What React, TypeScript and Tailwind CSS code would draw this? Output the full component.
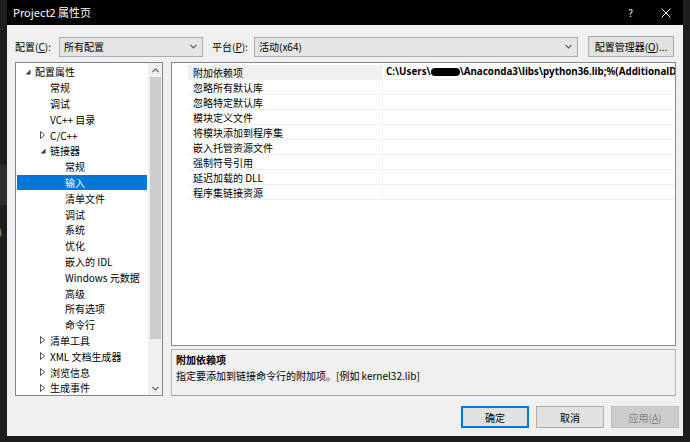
import React from 'react';

type TreeItem = { label: string; level: number; tri?: 'open' | 'closed'; selected?: boolean };

const TREE: TreeItem[] = [
  { label: '配置属性', level: 0, tri: 'open' },
  { label: '常规', level: 1 },
  { label: '调试', level: 1 },
  { label: 'VC++ 目录', level: 1 },
  { label: 'C/C++', level: 1, tri: 'closed' },
  { label: '链接器', level: 1, tri: 'open' },
  { label: '常规', level: 2 },
  { label: '输入', level: 2, selected: true },
  { label: '清单文件', level: 2 },
  { label: '调试', level: 2 },
  { label: '系统', level: 2 },
  { label: '优化', level: 2 },
  { label: '嵌入的 IDL', level: 2 },
  { label: 'Windows 元数据', level: 2 },
  { label: '高级', level: 2 },
  { label: '所有选项', level: 2 },
  { label: '命令行', level: 2 },
  { label: '清单工具', level: 1, tri: 'closed' },
  { label: 'XML 文档生成器', level: 1, tri: 'closed' },
  { label: '浏览信息', level: 1, tri: 'closed' },
  { label: '生成事件', level: 1, tri: 'closed' },
];

const INDENT = ['w-[8px]', 'w-[23px]', 'w-[38px]'];

const PROPS = [
  '附加依赖项',
  '忽略所有默认库',
  '忽略特定默认库',
  '模块定义文件',
  '将模块添加到程序集',
  '嵌入托管资源文件',
  '强制符号引用',
  '延迟加载的 DLL',
  '程序集链接资源',
];

const Chevron = ({ up = false }: { up?: boolean }) => (
  <svg width="7" height="5" viewBox="0 0 7 5" className={up ? 'rotate-180' : ''}>
    <path d="M0.5 1 L3.5 4 L6.5 1" fill="none" stroke="#606060" strokeWidth="1.1" />
  </svg>
);

const Triangle = ({ kind }: { kind?: 'open' | 'closed' }) => {
  if (!kind) return null;
  if (kind === 'open')
    return (
      <svg width="6" height="6" viewBox="0 0 6 6">
        <path d="M5.5 0.5 L5.5 5.5 L0.5 5.5 Z" fill="#404040" />
      </svg>
    );
  return (
    <svg width="5" height="8" viewBox="0 0 5 8">
      <path d="M0.5 0.5 L4.5 4 L0.5 7.5 Z" fill="none" stroke="#505050" strokeWidth="1" />
    </svg>
  );
};

const Dropdown = ({ text, width }: { text: string; width: string }) => (
  <div className={`${width} h-[20px] flex items-center justify-between bg-[#e5e5e5] border border-[#acacac] pl-[4px] pr-[5px]`}>
    <span>{text}</span>
    <Chevron />
  </div>
);

export default function App() {
  return (
    <div className="w-[690px] h-[442px] bg-[#1e1e1e] flex overflow-hidden text-[10px] text-black [font-family:'Noto_Sans_CJK_SC',sans-serif]">
      {/* VS background peeking on the left */}
      <div className="w-[7px] flex flex-col">
        <div className="h-[165px]" />
        <div className="h-[40px] bg-[#2d2d30]" />
        <div className="h-[22px]" />
        <div className="text-[#c8c8c8] text-[9px] leading-[10px] -ml-[1px]">)</div>
      </div>

      <div className="w-[676px] h-[436px] flex flex-col">
        {/* Title bar */}
        <div className="h-[25px] bg-black text-white flex items-center pl-[6px] pr-[12px]">
          <span className="text-[11px]">Project2 属性页</span>
          <span className="ml-auto text-[10px] mr-[28px]">?</span>
          <svg width="10" height="10" viewBox="0 0 10 10">
            <path d="M0.5 0.5 L9.5 9.5 M9.5 0.5 L0.5 9.5" stroke="#ffffff" strokeWidth="1" />
          </svg>
        </div>

        {/* Body */}
        <div className="flex-1 bg-[#f0f0f0] flex flex-col pl-[8px] pr-[4px] pt-[11px] pb-[8px]">
          {/* Config row */}
          <div className="h-[21px] flex items-center">
            <span className="w-[44px]">
              配置(<span className="underline">C</span>):
            </span>
            <Dropdown text="所有配置" width="w-[144px]" />
            <span className="ml-[9px] w-[42px]">
              平台(<span className="underline">P</span>):
            </span>
            <Dropdown text="活动(x64)" width="w-[324px]" />
            <div className="ml-[10px] w-[86px] h-[21px] bg-[#e1e1e1] border border-[#adadad] flex items-center justify-center">
              配置管理器(<span className="underline">O</span>)...
            </div>
          </div>

          {/* Main */}
          <div className="mt-[5px] h-[334px] flex gap-[8px]">
            {/* Tree */}
            <div className="w-[148px] h-full border border-[#828790] bg-white flex">
              <div className="flex-1 p-[1px]">
                {TREE.map((it, i) => (
                  <div
                    key={i}
                    className={`h-[15.8px] flex items-center whitespace-nowrap ${it.selected ? 'bg-[#0078d7] text-white' : ''}`}
                  >
                    <div className={INDENT[it.level]} />
                    <div className="w-[10px] flex items-center">
                      <Triangle kind={it.tri} />
                    </div>
                    <span>{it.label}</span>
                  </div>
                ))}
              </div>
              <div className="w-[14px] bg-[#f0f0f0] flex flex-col items-center">
                <div className="h-[14px] flex items-center justify-center">
                  <Chevron up />
                </div>
                <div className="w-[11px] h-[262px] bg-[#cdcdcd]" />
                <div className="flex-1" />
                <div className="h-[14px] flex items-center justify-center">
                  <Chevron />
                </div>
              </div>
            </div>

            {/* Property grid + description */}
            <div className="w-[505px] flex flex-col">
              <div className="h-[284px] border border-[#828790] bg-white pt-[2px] flex flex-col">
                {PROPS.map((p, i) => (
                  <div key={i} className="h-[15px] flex">
                    <div className="w-[16px] bg-white" />
                    <div
                      className={`w-[194px] pl-[5px] flex items-center border-b border-[#f0f0f0] ${i === 0 ? 'bg-[#f0f0f0]' : ''}`}
                    >
                      {p}
                    </div>
                    <div className="flex-1 min-w-0 pl-[3px] flex items-center border-b border-l border-[#f0f0f0] overflow-hidden whitespace-nowrap">
                      {i === 0 && (
                        <span className="font-bold text-[9.8px] [font-family:'Noto_Sans',sans-serif] flex items-center">
                          C:\Users\
                          <span className="inline-block w-[29px] h-[8px] bg-black rounded-[4px]" />
                          \Anaconda3\libs\python36.lib;%(AdditionalD
                        </span>
                      )}
                    </div>
                  </div>
                ))}
              </div>
              <div className="mt-[3px] h-[47px] border border-[#b4b4b4] border-b-[#a0a0a0] bg-[#f0f0f0] px-[4px] pt-[2px]">
                <div className="h-[16px] leading-[16px] font-bold">附加依赖项</div>
                <div className="h-[16px] leading-[16px]">指定要添加到链接命令行的附加项。[例如 kernel32.lib]</div>
              </div>
            </div>
          </div>

          {/* Buttons */}
          <div className="mt-[10px] h-[22px] flex justify-end gap-[7px]">
            <div className="w-[68px] h-[22px] bg-[#e1e1e1] border-2 border-[#0078d7] flex items-center justify-center">
              确定
            </div>
            <div className="w-[68px] h-[22px] bg-[#e1e1e1] border border-[#adadad] flex items-center justify-center">
              取消
            </div>
            <div className="w-[68px] h-[22px] bg-[#cccccc] border border-[#bfbfbf] text-[#838383] flex items-center justify-center">
              应用(<span className="underline">A</span>)
            </div>
          </div>
        </div>
      </div>
    </div>
  );
}
